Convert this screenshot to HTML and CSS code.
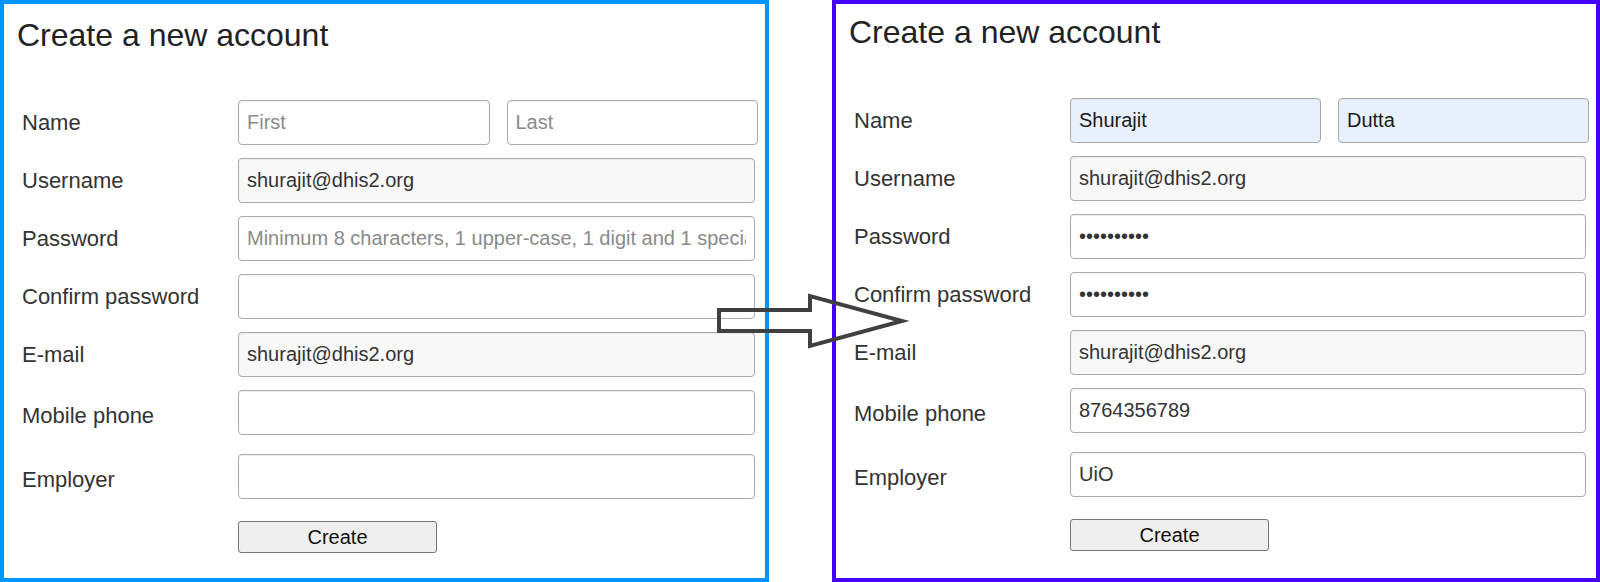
FILE: index.html
```html
<!DOCTYPE html>
<html>
<head>
<meta charset="utf-8">
<title>Create a new account</title>
<link rel="stylesheet" href="styles.css">
</head>
<body>
<div class="stage">
  <section class="panel panel-before">
    <h1 class="title">Create a new account</h1>
    <form class="form">
      <div class="row">
        <label class="label">Name</label>
        <div class="pair">
          <input class="field" type="text" placeholder="First">
          <input class="field" type="text" placeholder="Last">
        </div>
      </div>
      <div class="row">
        <label class="label">Username</label>
        <input class="field field-ro" type="text" value="shurajit@dhis2.org" readonly>
      </div>
      <div class="row">
        <label class="label">Password</label>
        <input class="field" type="password" placeholder="Minimum 8 characters, 1 upper-case, 1 digit and 1 special character">
      </div>
      <div class="row">
        <label class="label">Confirm password</label>
        <input class="field" type="password">
      </div>
      <div class="row">
        <label class="label">E-mail</label>
        <input class="field field-ro" type="text" value="shurajit@dhis2.org" readonly>
      </div>
      <div class="row">
        <label class="label label-low">Mobile phone</label>
        <input class="field" type="text">
      </div>
      <div class="row row-employer">
        <label class="label label-low">Employer</label>
        <input class="field" type="text">
      </div>
      <div class="row row-action">
        <span class="label"></span>
        <button class="btn" type="button">Create</button>
      </div>
    </form>
  </section>

  <section class="panel panel-after">
    <h1 class="title">Create a new account</h1>
    <form class="form">
      <div class="row">
        <label class="label">Name</label>
        <div class="pair">
          <input class="field field-auto" type="text" value="Shurajit">
          <input class="field field-auto" type="text" value="Dutta">
        </div>
      </div>
      <div class="row">
        <label class="label">Username</label>
        <input class="field field-ro" type="text" value="shurajit@dhis2.org" readonly>
      </div>
      <div class="row">
        <label class="label">Password</label>
        <input class="field" type="password" value="abcdefghij">
      </div>
      <div class="row">
        <label class="label">Confirm password</label>
        <input class="field" type="password" value="abcdefghij">
      </div>
      <div class="row">
        <label class="label">E-mail</label>
        <input class="field field-ro" type="text" value="shurajit@dhis2.org" readonly>
      </div>
      <div class="row">
        <label class="label label-low">Mobile phone</label>
        <input class="field" type="text" value="8764356789">
      </div>
      <div class="row row-employer">
        <label class="label label-low">Employer</label>
        <input class="field" type="text" value="UiO">
      </div>
      <div class="row row-action">
        <span class="label"></span>
        <button class="btn" type="button">Create</button>
      </div>
    </form>
  </section>

  <svg class="arrow" width="200" height="70" viewBox="710 290 200 70" aria-hidden="true">
    <polygon points="719,310 810,310 810,296 902,321 810,346 810,331 719,331" fill="none" stroke="#404040" stroke-width="4" stroke-linejoin="miter" stroke-miterlimit="10"/>
  </svg>
</div>
</body>
</html>
```

FILE: styles.css
```css
* {
  box-sizing: border-box;
}

html, body {
  margin: 0;
  padding: 0;
  background: #ffffff;
}

body {
  font-family: "Liberation Sans", Arial, sans-serif;
  color: #333333;
}

.stage {
  position: relative;
  display: flex;
  gap: 63px;
  width: 1600px;
  height: 582px;
  overflow: hidden;
}

.panel {
  height: 582px;
  border: 4px solid #0096ff;
  padding: 13px 10px 0 16px;
}

.panel-before {
  width: 769px;
  border-color: #0096ff;
}

.panel-after {
  width: 768px;
  border-color: #4400ff;
  padding-top: 10px;
}

.title {
  margin: 0 0 0 -3px;
  font-size: 32px;
  line-height: 37px;
  font-weight: normal;
  color: #222222;
}

.form {
  display: flex;
  flex-direction: column;
  gap: 13px;
  margin-top: 46px;
}

.panel-after .form {
  margin-top: 47px;
}

.row {
  display: flex;
  align-items: center;
}

.label {
  flex: 0 0 218px;
  padding-left: 2px;
  font-size: 22px;
  color: #333333;
}

.label-low {
  padding-top: 6px;
}

.pair {
  flex: 1;
  min-width: 0;
  display: flex;
  gap: 17px;
  margin-right: -3px;
}

.field {
  flex: 1;
  width: 0;
  height: 45px;
  min-width: 0;
  padding: 0 8px;
  border: 1px solid #a9a9a9;
  border-radius: 4px;
  background: #ffffff;
  font-family: "Liberation Sans", Arial, sans-serif;
  font-size: 20px;
  color: #333333;
  outline: none;
  box-shadow: inset 0 1px 1px rgba(0, 0, 0, 0.05);
}

.field::placeholder {
  color: #8a8a8a;
}

.field-ro {
  background: #f8f8f8;
}

.field-auto {
  background: #e8f0fe;
  color: #1a1a1a;
}

.row-employer {
  margin-top: 6px;
}

.row-action {
  margin-top: 9px;
}

.btn {
  width: 199px;
  height: 32px;
  padding: 0;
  border: 1px solid #767676;
  border-radius: 3px;
  background: #efefef;
  font-family: "Liberation Sans", Arial, sans-serif;
  font-size: 20px;
  color: #111111;
}

.arrow {
  position: absolute;
  left: 710px;
  top: 290px;
  overflow: visible;
}
```
